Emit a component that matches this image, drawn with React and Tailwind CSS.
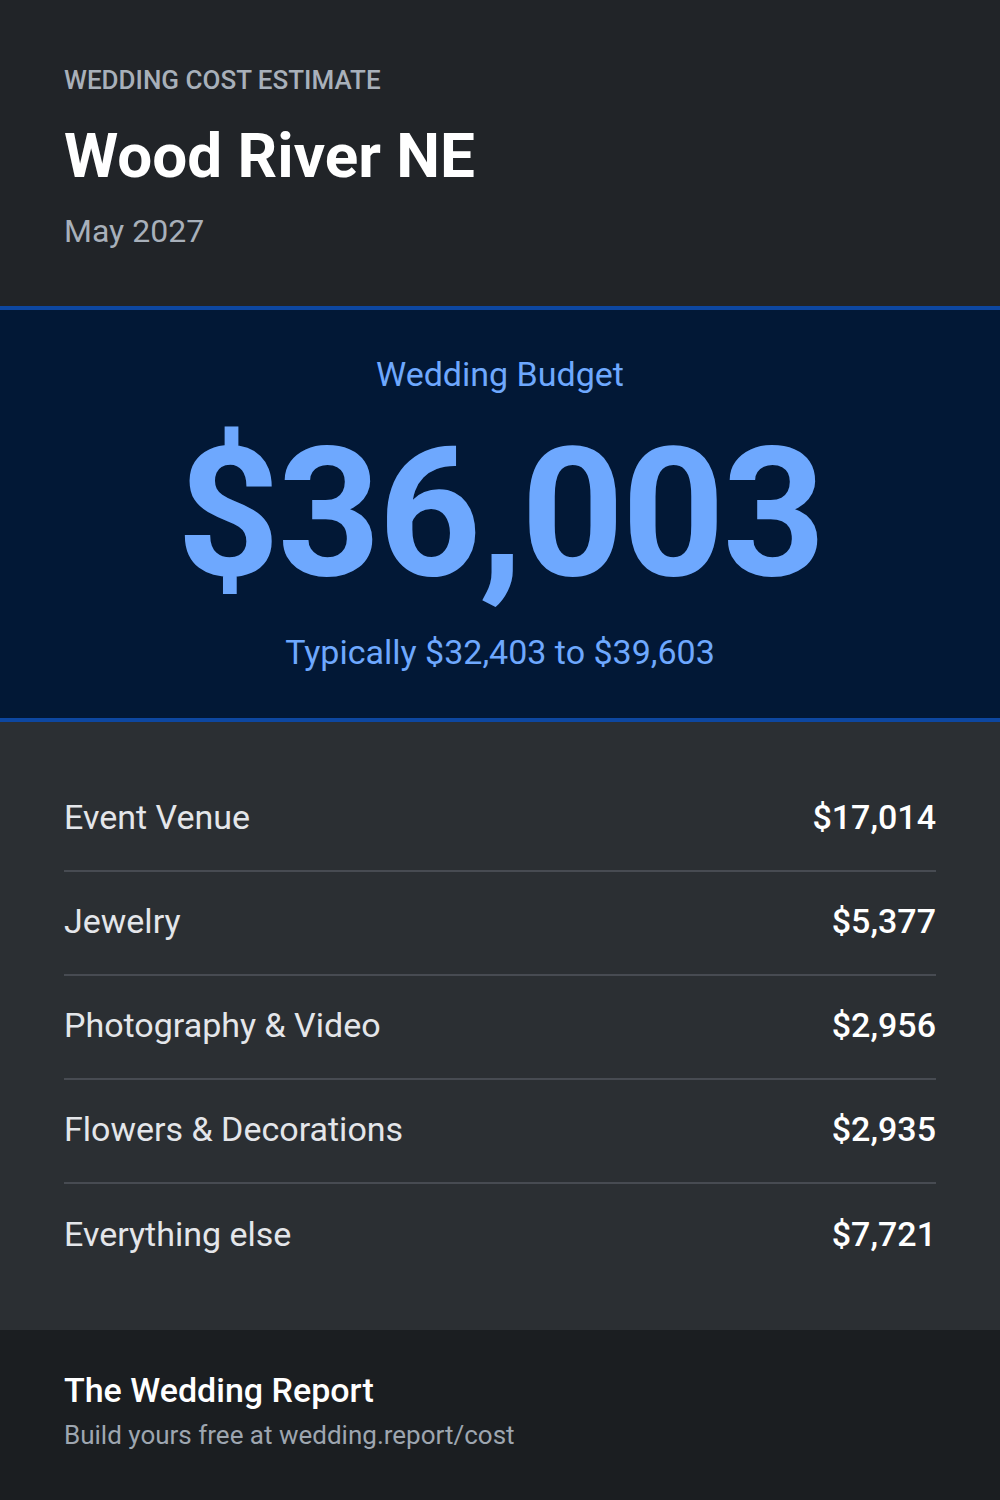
import React from "react";

const items = [
  { name: "Event Venue", cost: "$17,014" },
  { name: "Jewelry", cost: "$5,377" },
  { name: "Photography & Video", cost: "$2,956" },
  { name: "Flowers & Decorations", cost: "$2,935" },
  { name: "Everything else", cost: "$7,721" },
];

const App = () => {
  return (
    <div className="w-[1000px] h-[1500px] flex flex-col bg-[#2b2f33] font-['Roboto',sans-serif]">
      <header className="bg-[#212428] px-16 pt-[62px] h-[306px]">
        <p className="text-[26px] leading-[36px] font-medium text-[#a8b0ba] uppercase">Wedding Cost Estimate</p>
        <h1 className="mt-[22px] text-[62px] leading-[72px] font-bold text-white">Wood River NE</h1>
        <p className="mt-[19px] text-[32px] leading-[40px] text-[#a8b0ba]">May 2027</p>
      </header>

      <section className="bg-[#021836] border-y-4 border-[#0d47a1] h-[416px] flex flex-col items-center pt-[42px]">
        <p className="text-[34px] leading-[44px] text-[#6ea8fe]">Wedding Budget</p>
        <p className="mt-[18px] text-[180px] leading-[200px] font-bold tracking-[-2.5px] text-[#6ea8fe]">$36,003</p>
        <p className="mt-[16px] text-[34px] leading-[44px] text-[#6ea8fe]">Typically $32,403 to $39,603</p>
      </section>

      <ul className="flex-1 px-16 pt-[46px] pb-[42px]">
        {items.map((it, i) => (
          <li
            key={it.name}
            className={`h-[104px] pb-[4px] flex items-center justify-between ${i < items.length - 1 ? "border-b-2 border-[#474b52]" : ""}`}
          >
            <span className="text-[34px] text-[#e4e6ea]">{it.name}</span>
            <span className="text-[34px] font-medium text-white">{it.cost}</span>
          </li>
        ))}
      </ul>

      <footer className="bg-[#1b1e21] h-[170px] px-16 pt-[38px]">
        <p className="text-[34px] leading-[44px] font-medium text-white">The Wedding Report</p>
        <p className="mt-[6px] text-[26px] leading-[34px] text-[#9ea6b0]">Build yours free at wedding.report/cost</p>
      </footer>
    </div>
  );
};

export default App;
